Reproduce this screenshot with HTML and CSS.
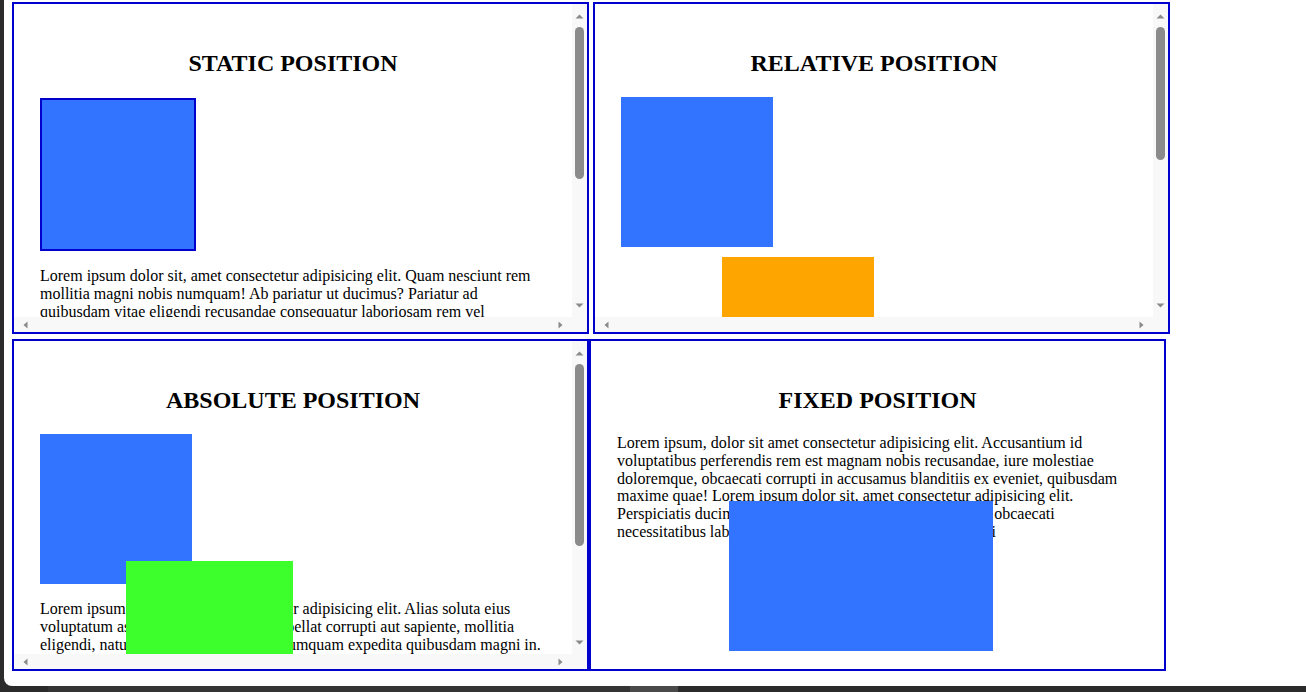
FILE: index.html
```html
<!DOCTYPE html>
<html lang="en">
<head>
<meta charset="utf-8">
<title>CSS Position</title>
<link rel="stylesheet" href="styles.css">
</head>
<body>
<div class="screen">
  <div class="grid">
    <div class="row row-top">
      <section class="box scroll">
        <div class="viewport">
          <h2>STATIC POSITION</h2>
          <div class="square square-bordered"></div>
          <p>Lorem ipsum dolor sit, amet consectetur adipisicing elit. Quam nesciunt rem mollitia magni nobis numquam! Ab pariatur ut ducimus? Pariatur ad quibusdam vitae eligendi recusandae consequatur laboriosam rem vel voluptatem ipsam, voluptate nemo sequi harum quos deleniti placeat assumenda fugiat? Officiis eveniet, dolorum accusamus cumque saepe quod nisi deserunt facere provident aspernatur minus repellendus laborum sint iusto libero. Temporibus molestias dolor quibusdam, ipsa quasi nihil similique ratione magnam incidunt maxime error facilis eos explicabo aliquam sapiente tempore delectus, reiciendis omnis quas voluptatem!</p>
        </div>
        <div class="vbar">
          <div class="vbtn"><svg width="9" height="5" viewBox="0 0 9 5"><path d="M0.5 4.5h8L4.5 0.5z" fill="#8a8a8a"/></svg></div>
          <div class="thumb" style="height:152px"></div>
          <div class="vfill"></div>
          <div class="vbtn vbtn-end"><svg width="9" height="5" viewBox="0 0 9 5"><path d="M0.5 0.5h8L4.5 4.5z" fill="#8a8a8a"/></svg></div>
        </div>
        <div class="hbar">
          <div class="hbtn"><svg width="5" height="8" viewBox="0 0 5 8"><path d="M4.5 0.5v7L0.5 4z" fill="#8a8a8a"/></svg></div>
          <div class="hfill"></div>
          <div class="hbtn hbtn-end"><svg width="5" height="8" viewBox="0 0 5 8"><path d="M0.5 0.5v7L4.5 4z" fill="#8a8a8a"/></svg></div>
          <div class="corner"></div>
        </div>
      </section>
      <section class="box scroll">
        <div class="viewport">
          <h2>RELATIVE POSITION</h2>
          <div class="square"></div>
          <div class="orange"></div>
          <p>Lorem ipsum dolor sit amet consectetur adipisicing elit. Nemo nulla vel quibusdam sapiente quos iure dolores, repellendus eaque ipsam odio officia magni tenetur voluptatibus laboriosam temporibus praesentium, modi ex! Cumque deleniti quae aspernatur, obcaecati distinctio voluptas velit ipsum natus quasi tempora ea laborum dolorem impedit eius, nostrum amet enim doloribus asperiores.</p>
        </div>
        <div class="vbar">
          <div class="vbtn"><svg width="9" height="5" viewBox="0 0 9 5"><path d="M0.5 4.5h8L4.5 0.5z" fill="#8a8a8a"/></svg></div>
          <div class="thumb" style="height:133px"></div>
          <div class="vfill"></div>
          <div class="vbtn vbtn-end"><svg width="9" height="5" viewBox="0 0 9 5"><path d="M0.5 0.5h8L4.5 4.5z" fill="#8a8a8a"/></svg></div>
        </div>
        <div class="hbar">
          <div class="hbtn"><svg width="5" height="8" viewBox="0 0 5 8"><path d="M4.5 0.5v7L0.5 4z" fill="#8a8a8a"/></svg></div>
          <div class="hfill"></div>
          <div class="hbtn hbtn-end"><svg width="5" height="8" viewBox="0 0 5 8"><path d="M0.5 0.5v7L4.5 4z" fill="#8a8a8a"/></svg></div>
          <div class="corner"></div>
        </div>
      </section>
    </div>
    <div class="row row-bottom">
      <section class="box scroll">
        <div class="viewport positioned">
          <h2>ABSOLUTE POSITION</h2>
          <div class="square"></div>
          <p>Lorem ipsum dolor sit, amet consectetur adipisicing elit. Alias soluta eius voluptatum assumenda dolores quia repellat corrupti aut sapiente, mollitia eligendi, natum ipsa tempore eveniet numquam expedita quibusdam magni in. Quos dolorum voluptate quae veniam cum ex fugit, a ipsum cupiditate perspiciatis porro explicabo nam temporibus sint, deleniti accusantium officia. Repudiandae laborum necessitatibus nobis, aspernatur fugiat placeat modi eos reiciendis quasi commodi sit.</p>
          <div class="green"></div>
        </div>
        <div class="vbar">
          <div class="vbtn"><svg width="9" height="5" viewBox="0 0 9 5"><path d="M0.5 4.5h8L4.5 0.5z" fill="#8a8a8a"/></svg></div>
          <div class="thumb" style="height:182px"></div>
          <div class="vfill"></div>
          <div class="vbtn vbtn-end"><svg width="9" height="5" viewBox="0 0 9 5"><path d="M0.5 0.5h8L4.5 4.5z" fill="#8a8a8a"/></svg></div>
        </div>
        <div class="hbar">
          <div class="hbtn"><svg width="5" height="8" viewBox="0 0 5 8"><path d="M4.5 0.5v7L0.5 4z" fill="#8a8a8a"/></svg></div>
          <div class="hfill"></div>
          <div class="hbtn hbtn-end"><svg width="5" height="8" viewBox="0 0 5 8"><path d="M0.5 0.5v7L4.5 4z" fill="#8a8a8a"/></svg></div>
          <div class="corner"></div>
        </div>
      </section>
      <section class="box plain positioned">
        <h2>FIXED POSITION</h2>
        <p>Lorem ipsum, dolor sit amet consectetur adipisicing elit. Accusantium id voluptatibus perferendis rem est magnam nobis recusandae, iure molestiae doloremque, obcaecati corrupti in accusamus blanditiis ex eveniet, quibusdam maxime quae! Lorem ipsum dolor sit, amet consectetur adipisicing elit. Perspiciatis ducimus quae, vero fugiat tempora libero nam obcaecati necessitatibus laboriosam quasi dolorum voluptate eligendi</p>
        <div class="fixed-box"></div>
      </section>
    </div>
  </div>
</div>
<div class="taskbar">
  <span class="seg seg-a"></span>
  <span class="seg seg-b"></span>
</div>
</body>
</html>
```

FILE: styles.css
```css
html, body {
  margin: 0;
  padding: 0;
}

body {
  background: #2b2b2b;
  font-family: "Liberation Serif", "Times New Roman", serif;
  font-size: 16px;
  color: #000;
  width: 1306px;
  height: 692px;
  overflow: hidden;
}

.screen {
  margin-left: 4px;
  height: 686px;
  background: #fff;
  border-bottom-left-radius: 8px;
  padding: 2px 0 0 8px;
  box-sizing: border-box;
  overflow: hidden;
}

.grid {
  display: flex;
  flex-direction: column;
  gap: 5px;
}

.row {
  display: flex;
}

.row-top {
  gap: 4px;
}

.row-bottom {
  gap: 0;
}

.box {
  width: 577px;
  height: 332px;
  box-sizing: border-box;
  border: 2px solid #0000cd;
  overflow: hidden;
  flex: none;
  background: #fff;
}

.box.scroll {
  display: grid;
  grid-template-columns: 1fr 15px;
  grid-template-rows: 1fr 15px;
}

.box.plain {
  padding: 26px 26px;
}

.viewport {
  grid-column: 1;
  grid-row: 1;
  overflow: hidden;
  padding: 26px 26px 0;
  min-width: 0;
  min-height: 0;
}

.positioned {
  position: relative;
}

.box h2 {
  font-size: 24px;
  font-weight: bold;
  text-align: center;
  margin: 20px 0;
}

.box p {
  margin: 16px 0;
  line-height: 17.8px;
}

.square {
  width: 152px;
  height: 150px;
  background: #3274ff;
  margin-top: 20px;
}

.square-bordered {
  width: 156px;
  height: 153px;
  box-sizing: border-box;
  border: 2px solid #0000cd;
  margin-top: 21px;
}

.orange {
  position: relative;
  left: 101px;
  top: 10px;
  width: 152px;
  height: 150px;
  background: #ffa500;
}

.green {
  position: absolute;
  left: 112px;
  top: 220px;
  width: 167px;
  height: 94px;
  background: #3dff2c;
}

.fixed-box {
  position: absolute;
  left: 138px;
  top: 160px;
  width: 264px;
  height: 150px;
  background: #3274ff;
}

/* drawn scrollbars */
.vbar {
  grid-column: 2;
  grid-row: 1;
  background: #f8f8f8;
  display: flex;
  flex-direction: column;
  align-items: center;
}

.vbtn {
  height: 24px;
  flex: none;
  display: flex;
  align-items: center;
  justify-content: center;
  width: 15px;
}

.vbtn svg,
.hbtn svg {
  display: block;
}

.thumb {
  width: 9px;
  flex: none;
  margin-top: -1px;
  background: #8b8b8b;
  border-radius: 5px;
}

.vfill {
  flex: 1;
}

.hbar {
  grid-column: 1 / span 2;
  grid-row: 2;
  background: #f8f8f8;
  display: flex;
  align-items: center;
}

.hbtn {
  width: 23px;
  height: 15px;
  flex: none;
  display: flex;
  align-items: center;
  justify-content: center;
}

.hbtn-end {
  width: 24px;
}

.hfill {
  flex: 1;
}

.corner {
  width: 15px;
  height: 15px;
  flex: none;
}

/* bottom window strip */
.taskbar {
  height: 6px;
  display: flex;
  padding-left: 48px;
}

.seg {
  display: block;
  height: 6px;
}

.seg-a {
  width: 582px;
  background: #343434;
}

.seg-b {
  width: 48px;
  background: #4a4a4a;
}
```
